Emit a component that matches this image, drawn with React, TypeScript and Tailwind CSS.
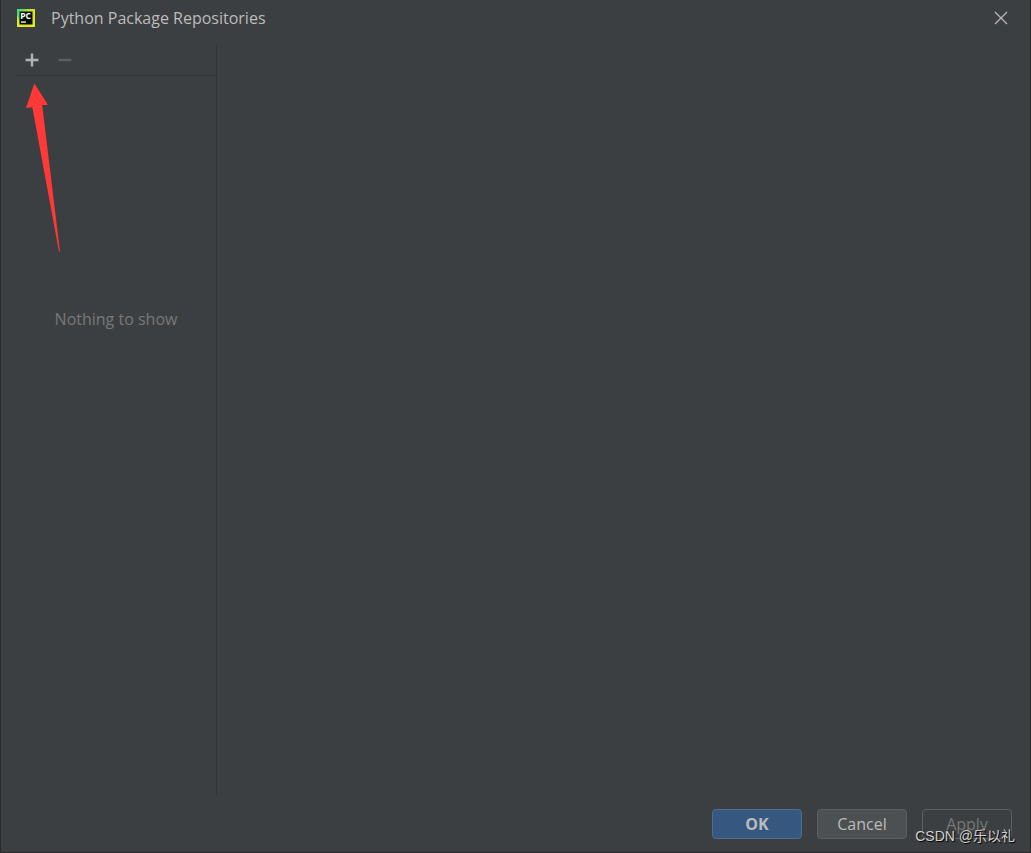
import React from 'react';

function PyCharmLogo() {
  return (
    <svg className="w-[18px] h-[18px] shrink-0" viewBox="0 0 18 18" aria-hidden="true">
      <defs>
        <linearGradient id="pycharm-frame" x1="0" y1="0" x2="1" y2="0.6">
          <stop offset="0" stopColor="#2fd99a" />
          <stop offset="0.3" stopColor="#6fe04a" />
          <stop offset="0.6" stopColor="#c8e62c" />
          <stop offset="1" stopColor="#e4e628" />
        </linearGradient>
      </defs>
      <rect width="18" height="18" fill="url(#pycharm-frame)" />
      <path d="M0 7v11h10L3 14z" fill="#e2e62a" />
      <rect x="2.5" y="2.5" width="13" height="13" fill="#060c06" />
      <text x="3.2" y="9.6" fill="#ffffff" fontSize="8.6" fontWeight="700" fontFamily="'Open Sans', sans-serif">
        PC
      </text>
      <rect x="4" y="12.4" width="5" height="1.3" fill="#ffffff" />
    </svg>
  );
}

function PointerArrow() {
  return (
    <svg
      className="absolute left-[10px] top-[7px] w-[36px] h-[170px] pointer-events-none"
      viewBox="0 0 36 170"
      aria-hidden="true"
    >
      <path d="M8.3 0.5L22 21.8L16.2 22.2L34 168.8H33L6.3 24.2L0 25z" fill="#ff3838" />
    </svg>
  );
}

function RepositoryList() {
  return (
    <aside className="w-[201px] shrink-0 flex flex-col border-r border-[#313335]">
      <div className="h-[31px] flex items-center gap-[17px] pl-2 border-b border-[#313335]">
        <button type="button" aria-label="Add repository" className="w-4 h-4 text-[#afb1b3]">
          <svg viewBox="0 0 16 16" className="w-4 h-4">
            <path d="M6.8 1.6h2.4v5.2h5.2v2.4H9.2v5.2H6.8V9.2H1.6V6.8h5.2z" fill="currentColor" />
          </svg>
        </button>
        <button type="button" aria-label="Remove repository" disabled className="w-4 h-4 text-[#5c5e60]">
          <svg viewBox="0 0 16 16" className="w-4 h-4">
            <path d="M1.6 6.8h12.8v2.4H1.6z" fill="currentColor" />
          </svg>
        </button>
      </div>
      <div className="relative flex-1 pt-[231px]">
        <PointerArrow />
        <p className="text-center text-base leading-6 text-[#787878]">Nothing to show</p>
      </div>
    </aside>
  );
}

export default function App() {
  return (
    <div
      role="dialog"
      aria-labelledby="dialog-title"
      className="relative min-h-screen flex flex-col bg-[#3c3f41] border-x border-b border-[#2b2b2d] font-['Open_Sans','Noto_Sans_CJK_SC',sans-serif] text-[#bbbbbb]"
    >
      <header className="h-9 mb-[9px] flex items-center pl-4 pr-[22px]">
        <PyCharmLogo />
        <h1 id="dialog-title" className="flex-1 ml-4 text-base leading-6">
          Python Package Repositories
        </h1>
        <button type="button" aria-label="Close" className="w-[14px] h-[14px] text-[#bbbbbb]">
          <svg viewBox="0 0 14 14" className="w-[14px] h-[14px]">
            <path d="M1 1l12 12M13 1L1 13" stroke="currentColor" strokeWidth="1.2" fill="none" />
          </svg>
        </button>
      </header>

      <main className="flex-1 flex pl-[15px]">
        <RepositoryList />
        <section className="flex-1" aria-label="Repository details"></section>
      </main>

      <footer className="flex justify-end gap-[15px] pt-[14px] pb-[13px] pr-[18px]">
        <button
          type="button"
          className="w-[90px] h-[30px] rounded border border-[#4c708c] bg-[#365880] text-base leading-6 font-bold"
        >
          OK
        </button>
        <button
          type="button"
          className="w-[90px] h-[30px] rounded border border-[#5e6060] bg-[#4c5052] text-base leading-6"
        >
          Cancel
        </button>
        <button
          type="button"
          disabled
          className="w-[90px] h-[30px] rounded border border-[#5e6060] text-base leading-6 text-[#777777]"
        >
          Apply
        </button>
      </footer>

      {/* Watermark */}
      <span className="absolute right-[15px] bottom-[6px] text-sm leading-5 whitespace-nowrap text-[#d0d0d0] [text-shadow:1px_1px_1px_#000000] font-['Liberation_Sans','Noto_Sans_CJK_SC',sans-serif]">
        CSDN @乐以礼
      </span>
    </div>
  );
}
